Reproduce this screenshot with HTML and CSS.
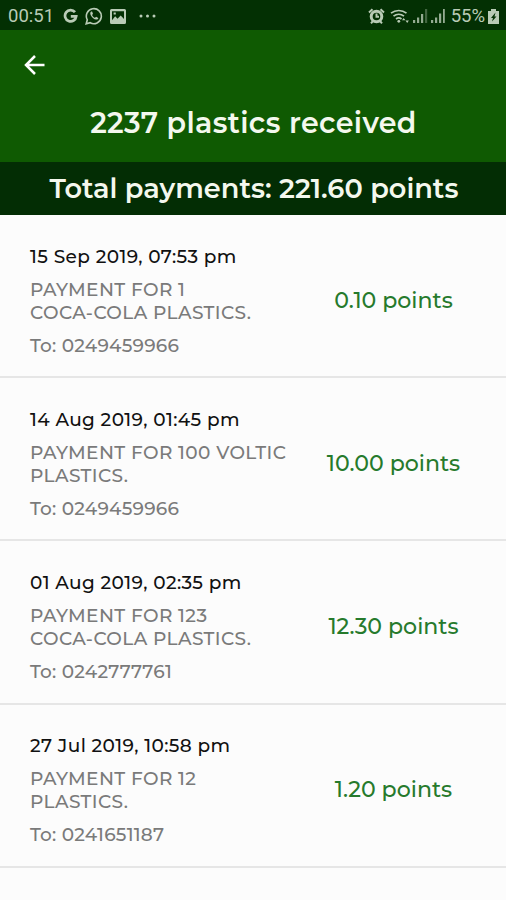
FILE: index.html
```html
<!DOCTYPE html>
<html lang="en">
<head>
    <meta charset="UTF-8">
    <meta name="viewport" content="width=device-width, initial-scale=1.0">
    <title>Payments</title>
    <link rel="stylesheet" href="styles.css">
</head>
<body>
    <div class="status-bar">
        <span class="clock">00:51</span>
        <svg class="icon-google" width="15" height="16" viewBox="0 0 15 16"><path d="M12 4.2A5.6 5.6 0 1 0 13.2 8.3H7.8" fill="none" stroke="currentColor" stroke-width="2.7"/></svg>
        <svg class="icon-whatsapp" width="18" height="18" viewBox="0 0 18 18"><path d="M1.2 16.8 2.3 12.8A7.5 7.5 0 1 1 5.2 15.7Z" fill="none" stroke="currentColor" stroke-width="1.6"/><path d="M6.2 4.6c-1.2.8-1.2 2.2-.3 3.8 1.2 2.2 3.2 3.9 5.2 4.2 1.2.1 2.2-.6 2.2-1.7l-2.2-1.2-1.1 1.1C8.7 10.2 7.7 9.2 7.1 7.9l.9-1.1-.9-2.2z" fill="currentColor"/></svg>
        <svg class="icon-image" width="16" height="15" viewBox="0 0 16 15"><path fill-rule="evenodd" d="M1.5 0h13A1.5 1.5 0 0 1 16 1.5v12a1.5 1.5 0 0 1-1.5 1.5h-13A1.5 1.5 0 0 1 0 13.5v-12A1.5 1.5 0 0 1 1.5 0zM2 2.2v9l3.2-4 2.3 2.6 3.2-3.3 3.3 3.5V2.2zM3.6 3.6h2.2v2H3.6z" fill="currentColor"/></svg>
        <svg class="icon-more" width="17" height="4" viewBox="0 0 17 4"><g fill="currentColor"><circle cx="2" cy="2" r="1.5"/><circle cx="8.5" cy="2" r="1.5"/><circle cx="15" cy="2" r="1.5"/></g></svg>

        <div class="status-right">
            <svg class="icon-alarm" width="17" height="16" viewBox="0 0 17 16"><circle cx="8.5" cy="8.5" r="5.3" fill="none" stroke="currentColor" stroke-width="3"/><path d="M8.5 5.5v3.3H11M1 4.500 4.500 1.300M16 4.500l-3.500-3.200M3 15.300l2-2.300M14 15.300 12 13" fill="none" stroke="currentColor" stroke-width="2"/></svg>
            <svg class="icon-wifi" width="20" height="16" viewBox="0 0 20 16"><path d="M1 5.2a12.5 12.5 0 0 1 15.5 0M3.5 8.2a8.5 8.5 0 0 1 10.5 0M6 11a4.5 4.5 0 0 1 5.5 0" fill="none" stroke="currentColor" stroke-width="1.7"/><circle cx="8.8" cy="13.3" r="1.4" fill="currentColor"/><path d="M12 12.3 13.7 10l1.700 2.300zM15.500 12.500h3.400L17.200 15z" fill="currentColor"/></svg>
            <svg class="icon-signal" width="15" height="14" viewBox="0 0 15 14"><g fill="currentColor"><path opacity=".8" d="M0 11h2.200v3H0zM4 8.500h2.200V14H4zM8 5h2.200v9H8z"/><path opacity=".35" d="M12 0h2.200v14H12z"/></g></svg>
            <svg class="icon-signal" width="15" height="14" viewBox="0 0 15 14"><path opacity=".8" d="M0 11h2.200v3H0zM4 8.500h2.200V14H4zM8 4.500h2.200V14H8zM12 0h1.800v14H12z" fill="currentColor"/></svg>
            <span class="battery-level">55%</span>
            <svg class="icon-battery" width="11" height="15" viewBox="0 0 11 15"><path d="M3 0h5v2h3v13H0V2h3z" fill="currentColor"/><path d="M7.500 3.500 3 9h2l-1 3.500L8.500 7.500H6.500z" fill="#063306"/></svg>
        </div>
    </div>

    <header>
        <svg class="back" width="22" height="22" viewBox="0 0 22 22"><path d="M20.5 11H2.5M11 2 2 11l9 9" fill="none" stroke="#fff" stroke-width="2.5"/></svg>
        <h1>2237 plastics received</h1>
    </header>
    <div class="total">Total payments: 221.60 points</div>

    <main>
        <div class="payment">
            <div class="details">
                <p class="date">15 Sep 2019, 07:53 pm</p>
                <p class="desc">PAYMENT FOR 1<br>COCA-COLA PLASTICS.</p>
                <p class="to">To: 0249459966</p>
            </div>
            <div class="points">0.10 points</div>
        </div>
        <div class="payment">
            <div class="details">
                <p class="date">14 Aug 2019, 01:45 pm</p>
                <p class="desc">PAYMENT FOR 100 VOLTIC<br>PLASTICS.</p>
                <p class="to">To: 0249459966</p>
            </div>
            <div class="points">10.00 points</div>
        </div>
        <div class="payment">
            <div class="details">
                <p class="date">01 Aug 2019, 02:35 pm</p>
                <p class="desc">PAYMENT FOR 123<br>COCA-COLA PLASTICS.</p>
                <p class="to">To: 0242777761</p>
            </div>
            <div class="points">12.30 points</div>
        </div>
        <div class="payment">
            <div class="details">
                <p class="date">27 Jul 2019, 10:58 pm</p>
                <p class="desc">PAYMENT FOR 12<br>PLASTICS.</p>
                <p class="to">To: 0241651187</p>
            </div>
            <div class="points">1.20 points</div>
        </div>
    </main>
</body>
</html>
```

FILE: styles.css
```css
* {
    box-sizing: border-box;
}
body {
    font-family: Montserrat, Inter, sans-serif;
    margin: 0;
    height: 900px;
    overflow: hidden;
    background-color: #fcfcfc;
}
.status-bar {
    display: flex;
    align-items: center;
    height: 30px;
    padding: 2px 7px 0 8px;
    background-color: #033003;
    color: #b9cbb6;
    font-family: Roboto, sans-serif;
    font-size: 18.5px;
}
.status-bar svg {
    flex: none;
}
.clock {
    width: 55px;
}
.icon-whatsapp {
    margin-left: 7px;
}
.icon-image {
    margin-left: 7px;
}
.icon-more {
    margin-left: 13px;
}
.status-right {
    display: flex;
    align-items: center;
    margin-left: auto;
}
.icon-wifi {
    margin-left: 5px;
}
.icon-signal {
    margin-left: 3px;
}
.battery-level {
    margin-left: 5px;
}
.icon-battery {
    margin-left: 3px;
}
header {
    height: 132px;
    padding: 24px 24px 0;
    background-color: #0f5a02;
    color: #f4f8ee;
}
.back {
    display: block;
}
h1 {
    margin: 30px 0 0 1px;
    font-size: 28.5px;
    line-height: 34px;
    font-weight: 600;
    letter-spacing: 0.35px;
    text-align: center;
    white-space: nowrap;
}
.total {
    height: 53px;
    padding-left: 2px;
    line-height: 53px;
    background-color: #032d04;
    color: #f4f8ee;
    font-size: 27.2px;
    font-weight: 600;
    text-align: center;
    white-space: nowrap;
}
.payment {
    display: flex;
    align-items: center;
    height: 163.2px;
    padding: 9px 0 0 30px;
    border-bottom: 2px solid #e6e6e6;
}
.details {
    width: 270px;
    padding-top: 1px;
    white-space: nowrap;
}
p {
    margin: 0;
    font-size: 18.5px;
    line-height: 23px;
    letter-spacing: 0.4px;
    color: #7a7a7a;
    font-weight: 500;
}
.date {
    color: #111;
}
.desc {
    margin: 10px 0;
}
.to {
    letter-spacing: 0.25px;
}
.points {
    width: 187px;
    color: #267a2c;
    font-size: 22.1px;
    font-weight: 500;
    text-align: center;
}
```
